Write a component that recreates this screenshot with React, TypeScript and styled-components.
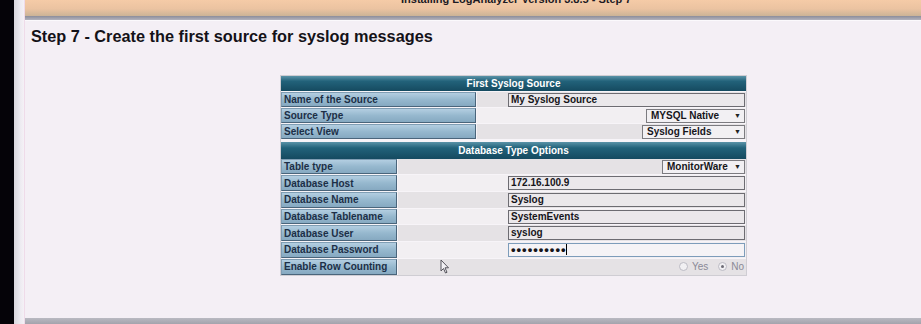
import styled, { createGlobalStyle } from 'styled-components';

const GlobalStyle = createGlobalStyle`
  html, body {
    margin: 0;
    padding: 0;
  }
  body {
    background: #f4eff5;
    font-family: 'Liberation Sans', Arial, sans-serif;
    overflow: hidden;
  }
`;

const Screen = styled.div`
  position: relative;
  display: flex;
  width: 921px;
  height: 324px;
  overflow: hidden;
  background: #f4eff5;
`;

const Bezel = styled.div`
  width: 14px;
  flex-shrink: 0;
  background: #050308;
`;

const Gutter = styled.div`
  width: 10px;
  flex-shrink: 0;
  background: linear-gradient(to right, #d9d7de, #eceaf0 60%, #f5f1f6);
  border-right: 1px solid #efdbe9;
`;

const Page = styled.div`
  flex: 1;
  min-width: 0;
  display: flex;
  flex-direction: column;
`;

const TitleBar = styled.div`
  height: 16px;
  overflow: hidden;
  background: linear-gradient(#f5cba7, #ebc3a1 55%, #cbb396);
`;

const TitleText = styled.div`
  margin: -8px 0 0 376px;
  font: bold 11px/14px 'Liberation Sans', Arial, sans-serif;
  color: #1c1a24;
  white-space: nowrap;
`;

const Divider = styled.div`
  height: 4px;
  background: linear-gradient(#8b8d9a, #b3b3bc);
  border-bottom: 1px solid #fbf9fc;
`;

const Content = styled.div`
  flex: 1;
  padding: 5px 0 0 6px;
`;

const Heading = styled.h1`
  margin: 0;
  font: bold 16.3px/20px 'Liberation Sans', Arial, sans-serif;
  color: #141218;
`;

const FormTable = styled.div`
  width: 467px;
  box-sizing: border-box;
  margin: 29px 0 0 249px;
  border: 1px solid #cfcdd3;
  background: #f7f4f8;
  display: flex;
  flex-direction: column;
  gap: 3px;
`;

const Section = styled.div<{ $label: number; $row: number }>`
  display: grid;
  grid-template-columns: ${(p) => p.$label}px 1fr;
  grid-auto-rows: ${(p) => p.$row}px;
  gap: 1px;
`;

const SectionHeader = styled.div<{ $h: number }>`
  grid-column: 1 / -1;
  height: ${(p) => p.$h}px;
  background: linear-gradient(#5a93a8, #22627a 35%, #154a60);
  color: #fff;
  font: bold 10px/${(p) => p.$h}px 'Liberation Sans', Arial, sans-serif;
  text-align: center;
`;

const Label = styled.div`
  box-sizing: border-box;
  border: 1px solid;
  border-color: #7f9db3 #4a657b #4a657b #7f9db3;
  background: linear-gradient(#b3cee1, #96b8ce 50%, #86a9c1);
  color: #1c2f47;
  font: bold 10px 'Liberation Sans', Arial, sans-serif;
  padding-left: 2px;
  display: flex;
  align-items: center;
  white-space: nowrap;
`;

const Value = styled.div<{ $alt?: boolean }>`
  background: ${(p) => (p.$alt ? '#f2eff2' : '#e5e2e5')};
  display: flex;
  align-items: center;
  justify-content: flex-end;
  padding-right: 1px;
`;

const TextBox = styled.div<{ $focus?: boolean }>`
  width: 237px;
  height: 14px;
  box-sizing: border-box;
  border: 1px solid ${(p) => (p.$focus ? '#7d9cba' : '#6d6c72')};
  background: ${(p) => (p.$focus ? '#f5f3f6' : '#ebe8eb')};
  color: #16151a;
  font: bold 10px/12px 'Liberation Sans', Arial, sans-serif;
  padding-left: 2px;
  display: flex;
  align-items: center;
  white-space: nowrap;
`;

const Dots = styled.span`
  font: bold 13px/12px 'Liberation Sans', Arial, sans-serif;
  letter-spacing: 1px;
`;

const Caret = styled.span`
  width: 1px;
  height: 11px;
  background: #000;
  margin-left: -1px;
`;

const SelectBox = styled.div<{ $w: number }>`
  width: ${(p) => p.$w}px;
  height: 14px;
  box-sizing: border-box;
  border: 1px solid #7c7b80;
  background: #f2f0f3;
  color: #16151a;
  font: bold 10px/12px 'Liberation Sans', Arial, sans-serif;
  padding: 0 3px 0 4px;
  display: flex;
  align-items: center;
  justify-content: space-between;
  white-space: nowrap;
`;

const Arrow = styled.span`
  font-size: 7px;
  color: #222;
`;

const RadioGroup = styled.div`
  display: flex;
  align-items: center;
  gap: 4px;
  padding-right: 1px;
  font: 10px 'Liberation Sans', Arial, sans-serif;
  color: #8a8996;
`;

const Radio = styled.span<{ $on?: boolean }>`
  width: 9px;
  height: 9px;
  box-sizing: border-box;
  border-radius: 50%;
  border: 1px solid #bcbbc4;
  background: #f1f0f3;
  display: flex;
  align-items: center;
  justify-content: center;
  margin-left: 6px;
  &::after {
    content: '';
    width: 3px;
    height: 3px;
    border-radius: 50%;
    background: ${(p) => (p.$on ? '#6d6c76' : 'transparent')};
  }
`;

const BottomBar = styled.div`
  height: 6px;
  background: linear-gradient(#b9b9c1, #a3a3ac);
`;

const Pointer = styled.svg`
  position: absolute;
  left: 440px;
  top: 259px;
`;

type Field = { label: string; kind: 'text' | 'select' | 'password' | 'radio'; value?: string; w?: number };

const sourceFields: Field[] = [
  { label: 'Name of the Source', kind: 'text', value: 'My Syslog Source' },
  { label: 'Source Type', kind: 'select', value: 'MYSQL Native', w: 99 },
  { label: 'Select View', kind: 'select', value: 'Syslog Fields', w: 103 },
];

const dbFields: Field[] = [
  { label: 'Table type', kind: 'select', value: 'MonitorWare', w: 83 },
  { label: 'Database Host', kind: 'text', value: '172.16.100.9' },
  { label: 'Database Name', kind: 'text', value: 'Syslog' },
  { label: 'Database Tablename', kind: 'text', value: 'SystemEvents' },
  { label: 'Database User', kind: 'text', value: 'syslog' },
  { label: 'Database Password', kind: 'password' },
  { label: 'Enable Row Counting', kind: 'radio' },
];

const FieldInput = ({ field }: { field: Field }) => {
  switch (field.kind) {
    case 'select':
      return (
        <SelectBox $w={field.w ?? 90}>
          {field.value}
          <Arrow>▼</Arrow>
        </SelectBox>
      );
    case 'password':
      return (
        <TextBox $focus>
          <Dots>••••••••••</Dots>
          <Caret />
        </TextBox>
      );
    case 'radio':
      return (
        <RadioGroup>
          <Radio />
          Yes
          <Radio $on />
          No
        </RadioGroup>
      );
    default:
      return <TextBox>{field.value}</TextBox>;
  }
};

const Rows = ({ fields }: { fields: Field[] }) => (
  <>
    {fields.map((f, i) => (
      <div key={f.label} style={{ display: 'contents' }}>
        <Label>{f.label}</Label>
        <Value $alt={i % 2 === 1}>
          <FieldInput field={f} />
        </Value>
      </div>
    ))}
  </>
);

export default function App() {
  return (
    <>
      <GlobalStyle />
      <Screen>
        <Bezel />
        <Gutter />
        <Page>
          <TitleBar>
            <TitleText>Installing LogAnalyzer Version 3.8.5 - Step 7</TitleText>
          </TitleBar>
          <Divider />
          <Content>
            <Heading>Step 7 - Create the first source for syslog messages</Heading>
            <FormTable>
              <Section $label={195} $row={15}>
                <SectionHeader $h={15}>First Syslog Source</SectionHeader>
                <Rows fields={sourceFields} />
              </Section>
              <Section $label={116} $row={15.7}>
                <SectionHeader $h={17}>Database Type Options</SectionHeader>
                <Rows fields={dbFields} />
              </Section>
            </FormTable>
          </Content>
          <BottomBar />
        </Page>
        <Pointer width="10" height="15" viewBox="0 0 10 15">
          <path d="M1 1 L1 12 L3.5 9.5 L5.5 14 L7 13.3 L5 8.8 L8.5 8.8 Z" fill="#f4f2f6" stroke="#55545c" strokeWidth="1" />
        </Pointer>
      </Screen>
    </>
  );
}
